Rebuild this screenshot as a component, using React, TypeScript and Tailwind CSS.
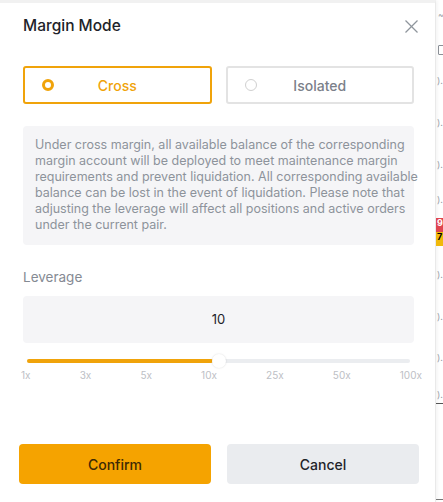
import { useState } from "react";

const marks = [1, 3, 5, 10, 25, 50, 100];

const noteLines = [
  "Under cross margin, all available balance of the corresponding",
  "margin account will be deployed to meet maintenance margin",
  "requirements and prevent liquidation. All corresponding available",
  "balance can be lost in the event of liquidation. Please note that",
  "adjusting the leverage will affect all positions and active orders",
  "under the current pair.",
];

const MarginModeModal = () => {
  const [mode, setMode] = useState<"cross" | "isolated">("cross");
  const [leverage] = useState(10);

  return (
    <div className="w-[436px] h-[502px] bg-white border-r border-t-[3px] border-r-[#e9e9e9] border-t-[#f1f1f1] shadow-[2px_0_3px_rgba(0,0,0,0.04)]">
      <div className="mt-[11px] h-6 ml-[23px] w-[395px] flex items-center justify-between">
        <h1 className="text-[15.5px] font-medium text-[#1e2329]">Margin Mode</h1>
        <button className="text-[#8f959c]">
          <svg width="13" height="13" viewBox="0 0 13 13" stroke="currentColor" strokeWidth="1.3">
            <line x1="0.5" y1="0.5" x2="12.5" y2="12.5" />
            <line x1="12.5" y1="0.5" x2="0.5" y2="12.5" />
          </svg>
        </button>
      </div>

      <div className="mt-[28px] ml-[23px] w-[391px] flex gap-[14px]">
        {(["cross", "isolated"] as const).map((m) => (
          <button
            key={m}
            onClick={() => setMode(m)}
            className={`relative flex-1 h-[38px] rounded-[3px] border-2 flex items-center justify-center ${
              mode === m ? "border-[#f0a30a]" : "border-[#e3e3e3]"
            }`}
          >
            <span
              className={`absolute left-[17px] w-[12px] h-[12px] rounded-full ${
                mode === m ? "border-[3px] border-[#f0a30a]" : "border border-[#d0d0d0]"
              }`}
            />
            <span className={`text-[14px] font-medium ${mode === m ? "text-[#f0a30a]" : "text-[#7b8089]"}`}>
              {m === "cross" ? "Cross" : "Isolated"}
            </span>
          </button>
        ))}
      </div>

      <div className="ml-[23px] w-[391px] mt-[22px] h-[119px] rounded-[4px] bg-[#f5f5f7] pl-[12px] pt-[11px]">
        <p className="text-[12.5px] leading-[16px] text-[#8d939b] whitespace-nowrap">
          {noteLines.map((line) => (
            <span key={line} className="block">
              {line}
            </span>
          ))}
        </p>
      </div>

      <div className="mt-[22px] ml-[23px] h-5 flex items-center text-[13.5px] text-[#858a93]">Leverage</div>

      <div className="ml-[23px] w-[391px] mt-[9px] h-[47px] rounded-[4px] bg-[#f5f5f7] flex items-center justify-center text-[13px] text-[#1e2329]">
        {leverage}
      </div>

      <div className="relative ml-[27px] w-[383px] mt-[12px] h-[12px] flex items-center">
        <div className="w-full h-[4px] rounded-full bg-[#ebedf0]" />
        <div className="absolute left-0 w-[186px] h-[4px] rounded-full bg-[#f0a30a]" />
        <div className="absolute left-[185px] w-[14px] h-[14px] rounded-full bg-white shadow-[0_0_2px_rgba(0,0,0,0.15)]" />
      </div>

      <div className="ml-[21px] w-[401px] mt-[1px] flex justify-between text-[10px] leading-[14px] text-[#bdc0c5]">
        {marks.map((m) => (
          <span key={m}>{m}x</span>
        ))}
      </div>

      <div className="mt-[62px] ml-[19px] flex gap-[16px]">
        <button className="w-[192px] h-[40px] rounded-[4px] bg-[#f5a300] text-[14px] font-medium text-[#3d2a05]">
          Confirm
        </button>
        <button className="w-[192px] h-[40px] rounded-[4px] bg-[#eaecef] text-[14px] font-medium text-[#1e2329]">
          Cancel
        </button>
      </div>
    </div>
  );
};

const rows = [81, 123, 165, 200, 275, 317, 358, 395];

const PageEdge = () => (
  <div className="relative flex-1 overflow-hidden text-[9px] leading-[10px] text-[#9aa0a6]">
    <div className="absolute left-[2px] top-[10px]">~</div>
    <div className="absolute left-[2px] top-[45px] w-[8px] h-[10px] border border-[#8a8f96] rounded-[1px]" />
    {rows.map((y) => (
      <div key={y} className="absolute left-[1px]" style={{ top: y - 5 }}>
        ).
      </div>
    ))}
    <div className="absolute left-0 top-[218px] w-full h-[14px] bg-[#e0454f] text-white font-bold pl-[1px]">9</div>
    <div className="absolute left-0 top-[232px] w-full h-[14px] bg-[#f0b90b] text-black font-bold pl-[1px]">7</div>
    <div className="absolute left-0 top-[403px] w-full h-px bg-[#555]" />
    <div className="absolute left-0 top-[499px] w-full h-px bg-[#777]" />
  </div>
);

export default function App() {
  return (
    <div className="flex w-[443px] h-[502px] bg-white overflow-hidden font-['Inter',sans-serif]">
      <MarginModeModal />
      <PageEdge />
    </div>
  );
}
